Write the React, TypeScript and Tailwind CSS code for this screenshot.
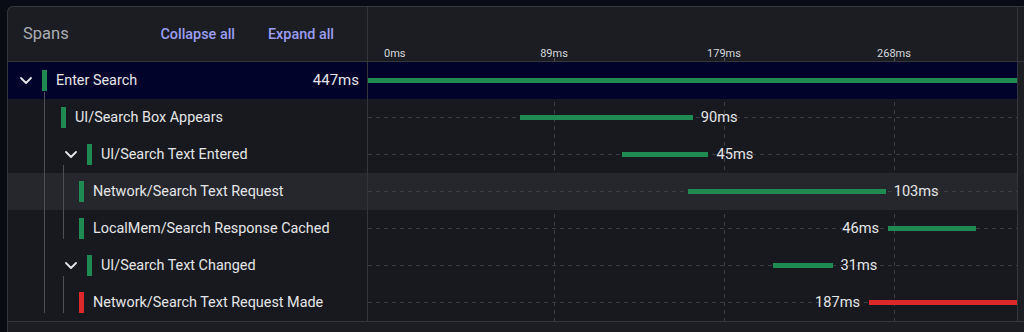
import React from "react"

type Span = {
  name: string
  start: number
  duration: number
  pad: number
  chevron?: boolean
  error?: boolean
  labelLeft?: boolean
  root?: boolean
  active?: boolean
}

const ORIGIN = 16
const SCALE = 1.92
const TICK_PX = 170
const ticks = ["0ms", "89ms", "179ms", "268ms"]

const spans: Span[] = [
  { name: "Enter Search", start: -8.4, duration: 447, pad: 12, chevron: true, root: true },
  { name: "UI/Search Box Appears", start: 70.8, duration: 90, pad: 53 },
  { name: "UI/Search Text Entered", start: 124, duration: 45, pad: 57, chevron: true },
  { name: "Network/Search Text Request", start: 158.3, duration: 103, pad: 71, active: true },
  { name: "LocalMem/Search Response Cached", start: 262.5, duration: 46, pad: 71, labelLeft: true },
  { name: "UI/Search Text Changed", start: 202.6, duration: 31, pad: 57, chevron: true },
  { name: "Network/Search Text Request Made", start: 252.6, duration: 187, pad: 71, error: true, labelLeft: true },
]

function Chevron() {
  return (
    <svg width="12" height="7" viewBox="0 0 12 7" className="shrink-0">
      <path d="M1 1l5 5 5-5" fill="none" stroke="#e6e6e8" strokeWidth="1.8" strokeLinecap="round" strokeLinejoin="round" />
    </svg>
  )
}

function Row({ span }: { span: Span }) {
  const left = ORIGIN + span.start * SCALE
  const width = span.duration * SCALE
  const bg = span.root ? "bg-[#01032a]" : span.active ? "bg-[#25272c]" : ""

  return (
    <div className={`flex h-[37px] ${bg}`}>
      <div className="w-[360px] shrink-0 flex items-center border-r border-[#34363b] pr-[8px]" style={{ paddingLeft: span.pad }}>
        {span.chevron && (
          <div className="mr-[10px] flex items-center">
            <Chevron />
          </div>
        )}
        <div className={`w-[5px] h-[21px] shrink-0 ${span.error ? "bg-[#dc2828]" : "bg-[#1f8a52]"}`} />
        <span className="ml-[9px] text-[14.4px] text-[#e6e6e8] whitespace-nowrap">{span.name}</span>
        {span.root && <span className="ml-auto text-[15px] text-[#e6e6e8]">{span.duration}ms</span>}
      </div>
      <div className="relative w-[650px] shrink-0 border-r border-[#34363b] overflow-hidden">
        {!span.root && (
          <div className="absolute left-0 right-0 top-[18px] h-px bg-[repeating-linear-gradient(90deg,#3b3d43_0_4px,transparent_4px_8px)]" />
        )}
        <div
          className={`absolute top-[16px] h-[5px] ${span.error ? "bg-[#dc2828]" : "bg-[#1f8a52]"}`}
          style={{ left, width: span.root ? 700 : width }}
        />
        {!span.root && (
          <span
            className="absolute top-[8px] text-[14.6px] leading-[21px] text-[#e6e6e8] whitespace-nowrap"
            style={span.labelLeft ? { right: 650 - left + 8 } : { left: left + width + 8 }}
          >
            {span.duration}ms
          </span>
        )}
      </div>
      <div className="flex-1 bg-[#1b1d22]" />
    </div>
  )
}

export default function App() {
  return (
    <div className="w-[1024px] h-[332px] overflow-hidden bg-[#0a0c15] pl-[7px] pt-[6px] font-['Roboto',sans-serif]">
      <div className="h-full flex flex-col border-l border-t border-[#34363b] rounded-tl-[6px] bg-[#1b1d22] overflow-hidden">
        {/* header */}
        <div className="flex h-[55px] shrink-0 border-b border-[#34363b]">
          <div className="w-[360px] shrink-0 flex items-center border-r border-[#34363b] pl-[15px] pr-[33px] pt-px">
            <span className="text-[16.5px] text-[#acaeb3]">Spans</span>
            <div className="ml-auto flex gap-[33px]">
              <button type="button" className="text-[14.4px] font-medium text-[#9c9ef2]">Collapse all</button>
              <button type="button" className="text-[14.4px] font-medium text-[#9c9ef2]">Expand all</button>
            </div>
          </div>
          <div className="relative w-[650px] shrink-0 border-r border-[#34363b]">
            {ticks.map((t, i) => {
              const x = ORIGIN + i * TICK_PX
              return (
                <React.Fragment key={t}>
                  <span
                    className={`absolute bottom-0 text-[11px] text-[#d8d9dc] leading-[14px] ${i === 0 ? "" : "-translate-x-1/2"}`}
                    style={{ left: x }}
                  >
                    {t}
                  </span>
                  {i > 0 && <div className="absolute bottom-0 w-px h-[3px] bg-[#55575d]" style={{ left: x }} />}
                </React.Fragment>
              )
            })}
          </div>
          <div className="flex-1" />
        </div>

        {/* rows */}
        <div className="relative shrink-0 bg-[#17191e]">
          <svg className="absolute left-[360px] top-0" width="650" height="259">
            {ticks.slice(1).map((t, i) => {
              const x = ORIGIN + (i + 1) * TICK_PX + 0.5
              return <line key={t} x1={x} x2={x} y1={0} y2={259} stroke="#3b3d43" strokeDasharray="4 4" />
            })}
          </svg>
          <div className="relative">
            {spans.map((s) => (
              <Row key={s.name} span={s} />
            ))}
          </div>
          {/* tree guides */}
          <div className="absolute left-[36px] top-[30px] w-px h-[221px] bg-[#4d4f55]" />
          <div className="absolute left-[55px] top-[103px] w-px h-[74px] bg-[#4d4f55]" />
          <div className="absolute left-[55px] top-[214px] w-px h-[37px] bg-[#4d4f55]" />
        </div>

        <div className="flex-1 border-t border-[#34363b] bg-[#1b1d22]" />
      </div>
    </div>
  )
}
